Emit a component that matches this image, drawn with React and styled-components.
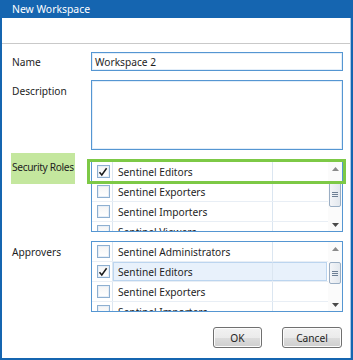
import React from 'react';
import styled, { createGlobalStyle } from 'styled-components';

const GlobalStyle = createGlobalStyle`
  html, body {
    margin: 0;
    padding: 0;
    background: #ffffff;
  }
  * {
    box-sizing: border-box;
  }
`;

const Window = styled.div`
  width: 353px;
  height: 360px;
  display: flex;
  flex-direction: column;
  background: #1565b0;
  padding: 0 2px 2px 2px;
  font-family: 'Noto Sans', 'Open Sans', sans-serif;
  font-size: 10.2px;
  color: #1e1e1e;
`;

const TitleBar = styled.div`
  height: 18px;
  display: flex;
  align-items: center;
  padding-left: 10px;
  color: #ffffff;
  font-size: 10.4px;
`;

const Body = styled.div`
  flex: 1;
  display: flex;
  flex-direction: column;
  background: #ffffff;
  border-right: 1px solid #a8c8e8;
`;

const Header = styled.div`
  height: 26px;
  border-bottom: 1px solid #c9c9c9;
`;

const Form = styled.div`
  display: grid;
  grid-template-columns: 89px 252px;
  padding-top: 8px;
`;

const Label = styled.div`
  padding-left: 10px;
  display: flex;
  white-space: nowrap;
  align-items: ${(p) => (p.$center ? 'center' : 'flex-start')};
  padding-top: ${(p) => (p.$center ? '0' : '4px')};
  margin-top: ${(p) => p.$mt || 0}px;
`;

const Highlighted = styled.div`
  align-self: start;
  margin: 3px 0 0 9px;
  width: 64px;
  height: 31px;
  background: #c4e79e;
  display: flex;
  align-items: center;
  white-space: nowrap;
  letter-spacing: -0.35px;
  padding: 0 0 3px 1px;
`;

const Field = styled.div`
  margin-top: ${(p) => p.$mt || 0}px;
  position: relative;
`;

const TextInput = styled.div`
  height: 19px;
  border: 1px solid #5596d2;
  box-shadow: inset 0 0 0 1px #e3eef9;
  display: flex;
  align-items: center;
  padding-left: 3px;
`;

const TextArea = styled.div`
  height: 70px;
  border: 1px solid #5596d2;
  box-shadow: inset 0 0 0 1px #e3eef9;
`;

const ListBox = styled.div`
  height: 71px;
  border: 1px solid #5596d2;
  display: flex;
  overflow: hidden;
`;

const Rows = styled.div`
  flex: 1;
  display: flex;
  flex-direction: column;
`;

const Row = styled.div`
  flex: 0 0 20px;
  display: grid;
  grid-template-columns: 21px 160px 1fr;
  border-bottom: 1px solid #e8eef5;
`;

const CheckCell = styled.div`
  display: flex;
  align-items: center;
  justify-content: center;
  padding-left: 2px;
  border-right: 1px solid #dbe6f1;
`;

const selectedLook = (p) =>
  p.$selected
    ? `background: #e8f1fb; border-top: 1px solid #bcd5ef; border-bottom: 1px solid #bcd5ef;`
    : '';

const NameCell = styled.div`
  display: flex;
  align-items: center;
  padding-left: 5px;
  border-right: 1px solid #dbe6f1;
  white-space: nowrap;
  overflow: hidden;
  ${selectedLook}
  ${(p) => (p.$selected ? 'border-left: 1px solid #bcd5ef; padding-left: 4px;' : '')}
`;

const EmptyCell = styled.div`
  ${selectedLook}
  ${(p) => (p.$selected ? 'border-right: 1px solid #bcd5ef; margin-right: 1px;' : '')}
`;

const Box = styled.div`
  width: 13px;
  height: 13px;
  border: 1px solid #8eafd0;
  background: linear-gradient(#f4f4f4, #ffffff);
  box-shadow: inset 0 0 0 1px #e6eef7;
  display: flex;
  align-items: center;
  justify-content: center;
`;

const ScrollBar = styled.div`
  width: 14px;
  display: flex;
  flex-direction: column;
  background: #fbfbfb;
`;

const Arrow = styled.div`
  height: 13px;
  display: flex;
  align-items: center;
  justify-content: center;
`;

const Track = styled.div`
  flex: 1;
  display: flex;
  flex-direction: column;
  align-items: center;
`;

const Thumb = styled.div`
  margin-top: ${(p) => p.$top}px;
  width: 12px;
  height: ${(p) => p.$height}px;
  border: 1px solid #9aaec4;
  border-radius: 2px;
  background: linear-gradient(90deg, #f3f5f8, #e3e8ee);
  display: flex;
  align-items: center;
  justify-content: center;
`;

const Focus = styled.div`
  position: absolute;
  left: -4px;
  right: -3px;
  top: -2px;
  height: 25px;
  border: 3px solid #7dc946;
  pointer-events: none;
`;

const Footer = styled.div`
  display: flex;
  justify-content: flex-end;
  gap: 20px;
  padding: 15px 8px 0 0;
`;

const Button = styled.div`
  flex: none;
  width: ${(p) => p.$w}px;
  height: 21px;
  border: 1px solid #707070;
  border-radius: 3px;
  background: linear-gradient(#f2f2f2 0%, #ebebeb 50%, #dddddd 51%, #cfcfcf 100%);
  box-shadow: inset 0 0 0 1px #fcfcfc;
  display: flex;
  align-items: center;
  justify-content: center;
`;

function Check({ checked }) {
  return (
    <Box>
      {checked && (
        <svg width="10" height="10" viewBox="0 0 10 10">
          <path d="M1.5 5.2 L3.8 8 L8.6 1.3" fill="none" stroke="#1b1b1b" strokeWidth="1.5" />
        </svg>
      )}
    </Box>
  );
}

function Grip() {
  return (
    <svg width="6" height="5" viewBox="0 0 6 5">
      <rect x="0" y="0" width="6" height="1" fill="#6d7f94" />
      <rect x="0" y="2" width="6" height="1" fill="#6d7f94" />
      <rect x="0" y="4" width="6" height="1" fill="#6d7f94" />
    </svg>
  );
}

function List({ items, thumbTop, thumbHeight }) {
  return (
    <ListBox>
      <Rows>
        {items.map((it) => (
          <Row key={it.name}>
            <CheckCell>
              <Check checked={it.checked} />
            </CheckCell>
            <NameCell $selected={it.selected}>{it.name}</NameCell>
            <EmptyCell $selected={it.selected} />
          </Row>
        ))}
      </Rows>
      <ScrollBar>
        <Arrow>
          <svg width="7" height="4" viewBox="0 0 7 4">
            <path d="M0 4 L3.5 0 L7 4 Z" fill="#8a8a8a" />
          </svg>
        </Arrow>
        <Track>
          <Thumb $top={thumbTop} $height={thumbHeight}>
            <Grip />
          </Thumb>
        </Track>
        <Arrow>
          <svg width="7" height="4" viewBox="0 0 7 4">
            <path d="M0 0 L7 0 L3.5 4 Z" fill="#4a4a4a" />
          </svg>
        </Arrow>
      </ScrollBar>
    </ListBox>
  );
}

const roles = [
  { name: 'Sentinel Editors', checked: true },
  { name: 'Sentinel Exporters' },
  { name: 'Sentinel Importers' },
  { name: 'Sentinel Viewers' },
];

const approvers = [
  { name: 'Sentinel Administrators' },
  { name: 'Sentinel Editors', checked: true, selected: true },
  { name: 'Sentinel Exporters' },
  { name: 'Sentinel Importers' },
];

export default function App() {
  return (
    <>
      <GlobalStyle />
      <Window>
        <TitleBar>New Workspace</TitleBar>
        <Body>
          <Header />
          <Form>
            <Label $center>Name</Label>
            <Field>
              <TextInput>Workspace 2</TextInput>
            </Field>

            <Label $mt={9}>Description</Label>
            <Field $mt={9}>
              <TextArea />
            </Field>

            <Highlighted>Security Roles</Highlighted>
            <Field $mt={11}>
              <List items={roles} thumbTop={6} thumbHeight={26} />
              <Focus />
            </Field>

            <Label $mt={9}>Approvers</Label>
            <Field $mt={9}>
              <List items={approvers} thumbTop={7} thumbHeight={22} />
            </Field>
          </Form>
          <Footer>
            <Button $w={49}>OK</Button>
            <Button $w={60}>Cancel</Button>
          </Footer>
        </Body>
      </Window>
    </>
  );
}
